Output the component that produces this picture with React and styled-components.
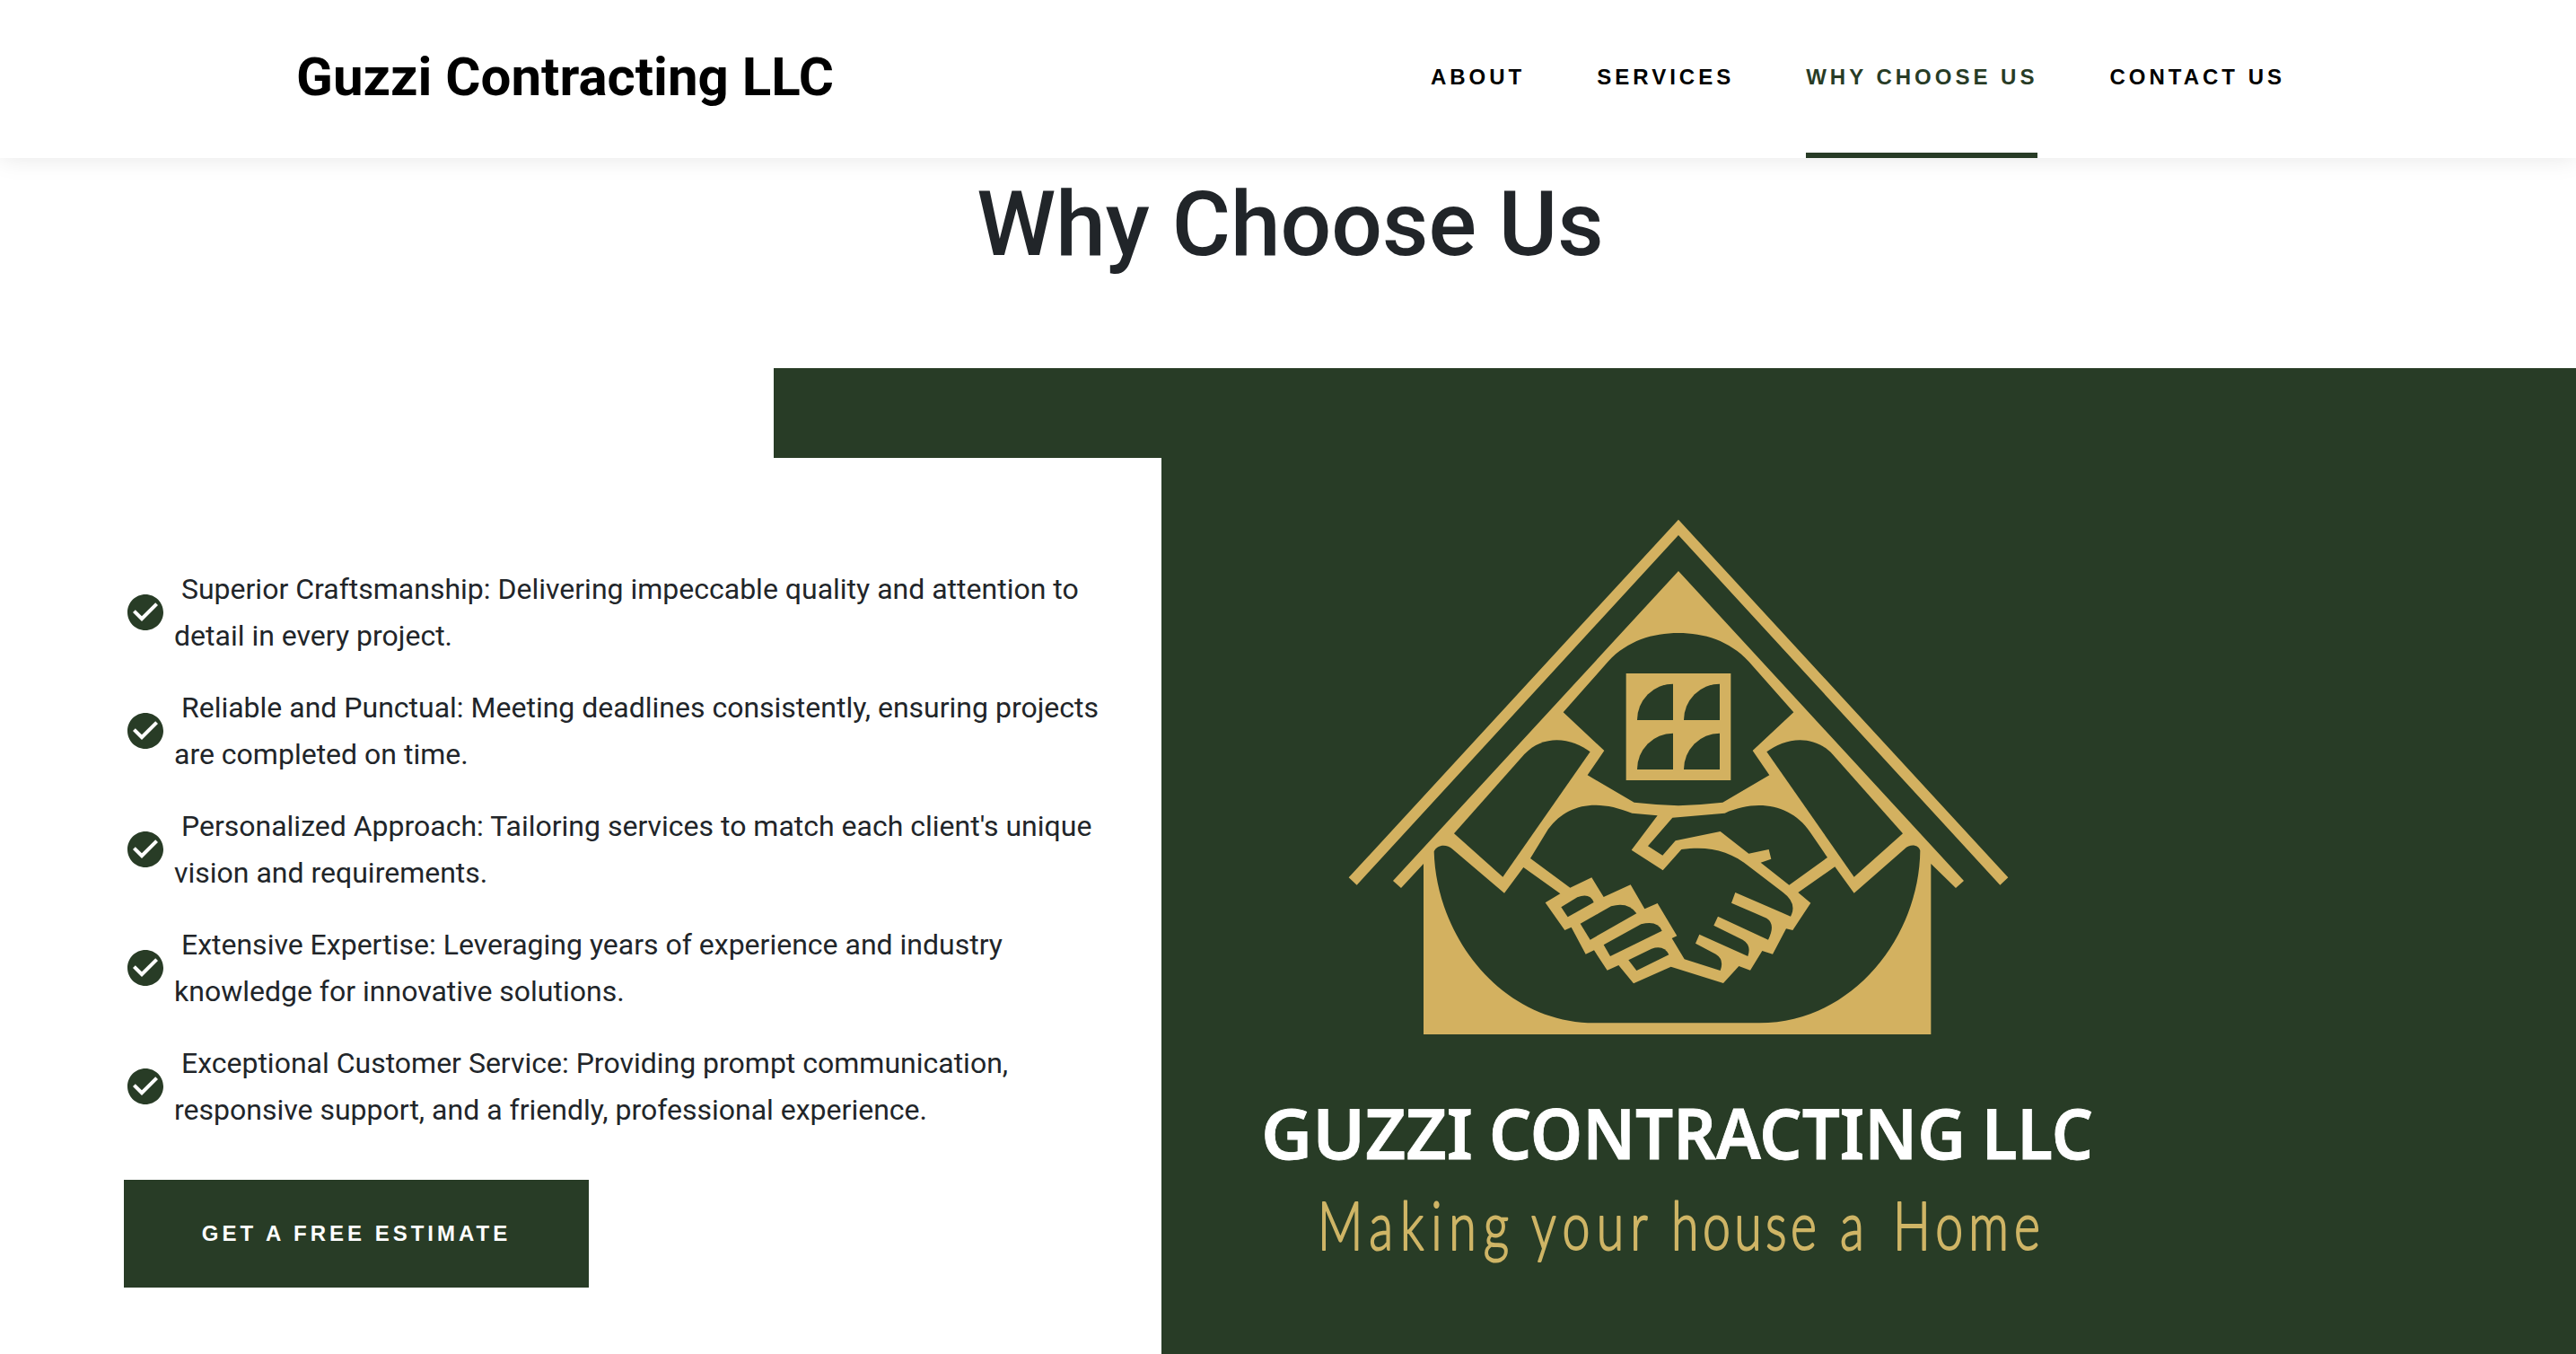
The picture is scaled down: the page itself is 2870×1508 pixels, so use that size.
import React from "react";
import styled, { createGlobalStyle } from "styled-components";
import { MdCheckCircle } from "react-icons/md";

const GREEN = "#283c26";
const GOLD = "#d3b160";

const GlobalStyle = createGlobalStyle`
  * { box-sizing: border-box; }
  body {
    margin: 0;
    background: #fff;
    color: #212529;
    font-family: Roboto, sans-serif;
    overflow: hidden;
  }
`;

const Page = styled.div`
  display: flex;
  flex-direction: column;
  height: 1508px;
  overflow: hidden;
`;

const Header = styled.header`
  flex: none;
  display: flex;
  justify-content: space-between;
  height: 176px;
  padding: 0 324px 0 330px;
  background: #fff;
  box-shadow: 0 0 26px rgba(0, 0, 0, 0.1);
`;

const Brand = styled.a`
  padding-top: 51px;
  color: #000;
  font-size: 60px;
  font-weight: 700;
  line-height: 70px;
`;

const Nav = styled.nav`
  display: flex;
  gap: 80px;
`;

const NavLink = styled.a`
  height: 176px;
  padding-top: 72px;
  border-bottom: 6px solid ${(p) => (p.$active ? GREEN : "transparent")};
  color: ${(p) => (p.$active ? GREEN : "#000")};
  font: 700 24px/28px "Liberation Sans", Arial, sans-serif;
  letter-spacing: 4px;
  white-space: nowrap;
`;

const Title = styled.h1`
  flex: none;
  height: 234px;
  margin: 0;
  padding: 14px 0 0 5px;
  font-size: 100px;
  font-weight: 500;
  line-height: 120px;
  text-align: center;
`;

const Feature = styled.section`
  flex: 1;
  display: grid;
  grid-template-columns: 862px 432px 1576px;
  grid-template-rows: 100px 1fr;
`;

const Backdrop = styled.div`
  grid-area: 1 / 2 / 3 / 4;
  background: ${GREEN};
`;

const Panel = styled.div`
  grid-area: 2 / 1 / 3 / 3;
  display: flex;
  flex-direction: column;
  align-items: flex-start;
  gap: 52px;
  padding: 120px 56px 0 138px;
  background: #fff;
`;

const Reasons = styled.ul`
  display: flex;
  flex-direction: column;
  gap: 28px;
  margin: 0;
  padding: 0;
  list-style: none;
`;

const Reason = styled.li`
  display: flex;
  align-items: center;
  gap: 8px;
  font-size: 32px;
  line-height: 52px;
`;

const CheckIcon = styled(MdCheckCircle)`
  flex: none;
  width: 48px;
  height: 48px;
  color: ${GREEN};
`;

const Button = styled.a`
  width: 518px;
  height: 120px;
  background: ${GREEN};
  color: #fff;
  font: 700 24px/120px "Liberation Sans", Arial, sans-serif;
  letter-spacing: 4px;
  text-align: center;
`;

const LogoArea = styled.div`
  grid-area: 2 / 3 / 3 / 4;
  padding: 30px 0 0 86px;
`;

const LogoSvg = styled.svg`
  display: block;
  width: 980px;
  height: 900px;
`;

const LogoName = styled.text`
  fill: #fff;
  stroke: #fff;
  stroke-width: 0.8px;
  font: 600 77px "Noto Sans", "Open Sans", sans-serif;
`;

const Tagline = styled.text`
  fill: #cfb566;
  stroke: #cfb566;
  stroke-width: 2px;
  stroke-linejoin: round;
  font: 300 75px Lato, sans-serif;
`;

const nameWords = [
  { text: "GUZZI", x: 1405, width: 236 },
  { text: "CONTRACTING", x: 1659, width: 531 },
  { text: "LLC", x: 2208, width: 124 },
];

const taglineWords = [
  { text: "Making", x: 1471, width: 207 },
  { text: "your", x: 1709, width: 124 },
  { text: "house", x: 1865, width: 156 },
  { text: "a", x: 2053, width: 26 },
  { text: "Home", x: 2112, width: 158 },
];

const SQUEEZE = 0.74;

const panes = [
  [1032, 605],
  [1188, 605],
  [1032, 770],
  [1188, 770],
];

const sleeve = "M875 832C820 788 722 768 655 840L420 1105L583 1250Z";

function Logo() {
  return (
    <LogoSvg viewBox="1380 540 980 900">
      <g transform="translate(1480 560) scale(0.333333)">
        <g fill={GOLD}>
          <path d="M1170 56L68 1252L95 1277L1170 108L2245 1277L2272 1252Z" />
          <path d="M1170 228L216 1263L243 1287L318 1206V1776H2014V1206L2097 1287L2124 1263Z" />
        </g>
        <g fill={GREEN}>
          <path d="M1170 435C1085 435 1000 460 935 530L785 700L922 828L866 910L1022 1001Q1095 1009 1170 1012Q1245 1009 1318 1001L1474 910L1418 828L1555 700L1405 530C1340 460 1255 435 1170 435Z" />
          <path d={sleeve} />
          <path d={sleeve} transform="translate(2340 0) scale(-1 1)" />
          <path d="M353 1165C362 1142 395 1138 415 1157L588 1304L652 1218L775 1306L725 1336L790 1428L812 1418L860 1508L888 1495L932 1562L970 1545L1020 1606L1145 1550L1320 1605L1372 1548L1410 1562L1450 1497L1485 1508L1530 1423L1552 1428L1612 1337L1570 1302L1693 1216L1757 1304L1925 1157C1945 1138 1972 1142 1978 1162C1975 1450 1752 1738 1440 1738H890C580 1738 360 1450 353 1165Z" />
          <path d="M675 1188L735 1090C800 1002 900 990 1015 1037L1100 1045L1013 1160L1118 1228L1180 1158C1270 1146 1340 1160 1410 1218L1520 1302Q1568 1338 1545 1382L1360 1302L1347 1337L1465 1388Q1496 1408 1470 1460L1302 1382L1288 1412L1385 1460Q1415 1478 1402 1515L1240 1442L1227 1472L1295 1508Q1324 1526 1310 1563L1190 1525L1148 1455L1165 1447L1100 1338L1057 1357L1010 1276L920 1317L880 1252L808 1286Z" />
          <path d="M1150 1052L1068 1147L1117 1178L1160 1129L1310 1098L1405 1172L1472 1158L1480 1190L1445 1202L1540 1277L1668 1185L1610 1100C1545 1005 1430 990 1325 1037Z" />
          <path d="M778 1351L832 1318Q874 1302 887 1335L800 1384Z" />
          <path d="M842 1406L945 1348Q1002 1332 1030 1372L875 1460Z" />
          <path d="M920 1477L1045 1408Q1100 1394 1115 1430L942 1515Z" />
          <path d="M1003 1528L1080 1490Q1122 1476 1138 1510L1030 1563Z" />
        </g>
        <path fill={GOLD} d="M995 570H1345V927H995Z" />
        {panes.map(([x, y]) => (
          <path
            key={`${x}-${y}`}
            fill={GREEN}
            d={`M${x + 120} ${y}V${y + 121}H${x}A120 121 0 0 1 ${x + 120} ${y}Z`}
          />
        ))}
      </g>
      {nameWords.map((w) => (
        <LogoName
          key={w.text}
          x={w.x}
          y="1290.5"
          textLength={w.width}
          lengthAdjust="spacingAndGlyphs"
        >
          {w.text}
        </LogoName>
      ))}
      {taglineWords.map((w) => (
        <Tagline
          key={w.text}
          transform={`translate(${w.x - 3} 1392) scale(${SQUEEZE} 1)`}
          textLength={(w.width + 6) / SQUEEZE}
        >
          {w.text}
        </Tagline>
      ))}
    </LogoSvg>
  );
}

const links = ["ABOUT", "SERVICES", "WHY CHOOSE US", "CONTACT US"];

const reasons = [
  "Superior Craftsmanship: Delivering impeccable quality and attention to detail in every project.",
  "Reliable and Punctual: Meeting deadlines consistently, ensuring projects are completed on time.",
  "Personalized Approach: Tailoring services to match each client's unique vision and requirements.",
  "Extensive Expertise: Leveraging years of experience and industry knowledge for innovative solutions.",
  "Exceptional Customer Service: Providing prompt communication, responsive support, and a friendly, professional experience.",
];

export default function App() {
  return (
    <Page>
      <GlobalStyle />
      <Header>
        <Brand>Guzzi Contracting LLC</Brand>
        <Nav>
          {links.map((l) => (
            <NavLink key={l} $active={l === "WHY CHOOSE US"}>
              {l}
            </NavLink>
          ))}
        </Nav>
      </Header>
      <Title>Why Choose Us</Title>
      <Feature>
        <Backdrop />
        <Panel>
          <Reasons>
            {reasons.map((r) => (
              <Reason key={r}>
                <CheckIcon />
                <span>{"\u00a0" + r}</span>
              </Reason>
            ))}
          </Reasons>
          <Button>GET A FREE ESTIMATE</Button>
        </Panel>
        <LogoArea>
          <Logo />
        </LogoArea>
      </Feature>
    </Page>
  );
}
